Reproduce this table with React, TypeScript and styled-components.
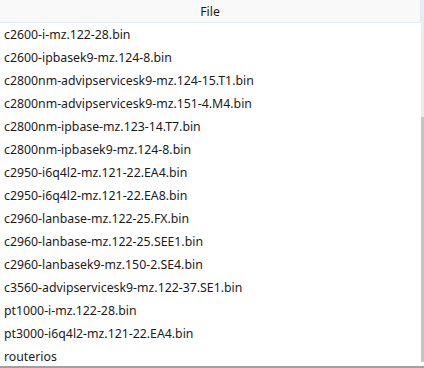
import { createGlobalStyle } from "styled-components";
import styled from "styled-components";

const files = [
  "c2600-i-mz.122-28.bin",
  "c2600-ipbasek9-mz.124-8.bin",
  "c2800nm-advipservicesk9-mz.124-15.T1.bin",
  "c2800nm-advipservicesk9-mz.151-4.M4.bin",
  "c2800nm-ipbase-mz.123-14.T7.bin",
  "c2800nm-ipbasek9-mz.124-8.bin",
  "c2950-i6q4l2-mz.121-22.EA4.bin",
  "c2950-i6q4l2-mz.121-22.EA8.bin",
  "c2960-lanbase-mz.122-25.FX.bin",
  "c2960-lanbase-mz.122-25.SEE1.bin",
  "c2960-lanbasek9-mz.150-2.SE4.bin",
  "c3560-advipservicesk9-mz.122-37.SE1.bin",
  "pt1000-i-mz.122-28.bin",
  "pt3000-i6q4l2-mz.121-22.EA4.bin",
  "routerios",
];

const GlobalStyle = createGlobalStyle`
  body {
    margin: 0;
    background: #ffffff;
    font-family: "Segoe UI", "Noto Sans", "Liberation Sans", sans-serif;
  }
`;

export default function App() {
  return (
    <>
      <GlobalStyle />
      <Frame>
        <Body>
          <Table>
            <HeaderCell>File</HeaderCell>
            {files.map((f) => (
              <Row key={f}>{f}</Row>
            ))}
          </Table>
          <Scrollbar>
            <Track />
            <Thumb />
          </Scrollbar>
        </Body>
      </Frame>
    </>
  );
}

const Frame = styled.div`
  width: 424px;
  height: 368px;
  box-sizing: border-box;
  border-bottom: 2px solid #a0a0a0;
  display: flex;
  flex-direction: column;
  overflow: hidden;
`;

const Body = styled.div`
  flex: 1;
  display: flex;
  min-height: 0;
`;

const Table = styled.div`
  flex: 1;
  display: flex;
  flex-direction: column;
  min-width: 0;
`;

const HeaderCell = styled.div`
  height: 23px;
  flex: none;
  box-sizing: border-box;
  background: #f9f9f9;
  border-bottom: 1px solid #e3ebf7;
  border-right: 1px solid #e3ebf7;
  display: flex;
  align-items: center;
  justify-content: center;
  font-size: 12.3px;
  color: #1a1a1a;
`;

const Row = styled.div`
  height: 23px;
  flex: none;
  display: flex;
  align-items: center;
  padding-left: 4px;
  font-size: 12.3px;
  color: #1a1a1a;
  white-space: nowrap;
`;

const Scrollbar = styled.div`
  width: 3px;
  display: flex;
  flex-direction: column;
  padding-bottom: 4px;
`;

const Track = styled.div`
  height: 117px;
  background: #ececec;
`;

const Thumb = styled.div`
  flex: 1;
  background: #c4c4c4;
`;
